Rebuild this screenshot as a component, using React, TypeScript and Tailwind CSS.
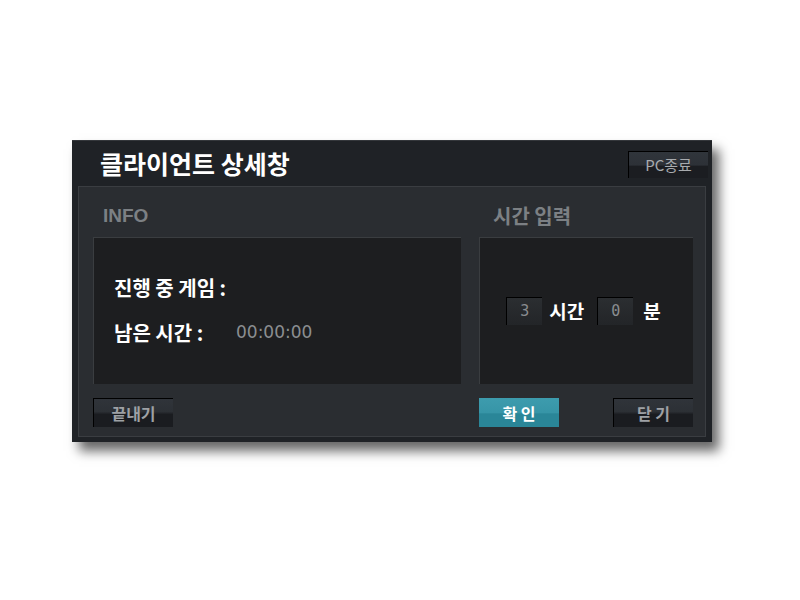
import React from 'react';

const font = { fontFamily: '"Noto Sans CJK KR", "Noto Sans", sans-serif' };

const DarkButton: React.FC<{ label: string; className?: string }> = ({ label, className = '' }) => (
    <button className={`w-[80px] h-[29px] border-t border-l border-black bg-[linear-gradient(#30343a_0%,#2c3035_45%,#1a1c20_55%,#1a1c20_100%)] text-[16px] font-bold text-[#9ea1a5] ${className}`}>
        {label}
    </button>
);

const TimeBox: React.FC<{ value: string }> = ({ value }) => (
    <div className="w-[36px] h-[28px] border-t border-l border-black bg-[linear-gradient(#2b2e31,#232528)] flex items-center justify-center text-[15px] text-[#8a8d90]" style={{ fontFamily: '"DejaVu Sans Mono", monospace' }}>
        {value}
    </div>
);

export default function App() {
    return (
        <div className="w-[800px] h-[600px] bg-white pt-[140px] pl-[72px]" style={font}>
            <div className="w-[640px] h-[302px] bg-[#1f2226] border-t border-[#34373b] flex flex-col shadow-[7px_9px_11px_rgba(0,0,0,0.6)]">
                {/* Title bar */}
                <div className="h-[45px] flex items-center justify-between pl-[28px] pr-[4px]">
                    <h1 className="text-[25px] font-bold text-white">클라이언트 상세창</h1>
                    <button className="w-[80px] h-[27px] mt-[2px] border-t border-l border-black bg-[linear-gradient(#30353b_0%,#2d3137_50%,#1b1d21_55%,#1b1d21_100%)] text-[15px] text-[#a8abae]">
                        PC종료
                    </button>
                </div>

                {/* Body */}
                <div className="flex-1 mx-[6px] mb-[5px] border border-[#3a3d41] bg-[#2a2d31] pl-[14px] pr-[12px] flex flex-col">
                    <div className="h-[50px] pt-[18px] flex font-bold text-[#7c8084] leading-[22px]">
                        <div className="w-[386px] pl-[10px] text-[19px]" style={{ fontFamily: '"Liberation Sans", sans-serif' }}>INFO</div>
                        <div className="pl-[14px] text-[20px]">시간 입력</div>
                    </div>

                    <div className="h-[147px] flex gap-[18px]">
                        {/* Info panel */}
                        <div className="w-[368px] bg-[#1d1e20] border-t border-l border-[#3a3d40] pl-[20px] pt-[38px] flex flex-col gap-[21px]">
                            <div className="h-[24px] flex items-center text-[20px] font-bold text-white">진행 중 게임 :</div>
                            <div className="h-[24px] flex items-center">
                                <span className="w-[122px] text-[20px] font-bold text-white">남은 시간 :</span>
                                <span className="text-[17px] text-[#8b8e91]" style={{ fontFamily: '"DejaVu Sans", sans-serif' }}>00:00:00</span>
                            </div>
                        </div>

                        {/* Time input panel */}
                        <div className="w-[214px] bg-[#1d1e20] border-t border-l border-[#3a3d40] flex items-center justify-center pr-[6px]">
                            <TimeBox value="3" />
                            <span className="ml-[7px] mr-[13px] text-[19px] font-bold text-white">시간</span>
                            <TimeBox value="0" />
                            <span className="ml-[10px] text-[19px] font-bold text-white">분</span>
                        </div>
                    </div>

                    <div className="mt-[14px] flex">
                        <DarkButton label="끝내기" />
                        <button className="ml-[306px] w-[80px] h-[29px] bg-[linear-gradient(#3d9cae_0%,#3795a7_50%,#2a8698_55%,#2a8698_100%)] text-[16px] font-bold text-white">
                            확 인
                        </button>
                        <DarkButton label="닫 기" className="ml-[54px]" />
                    </div>
                </div>
            </div>
        </div>
    );
}
